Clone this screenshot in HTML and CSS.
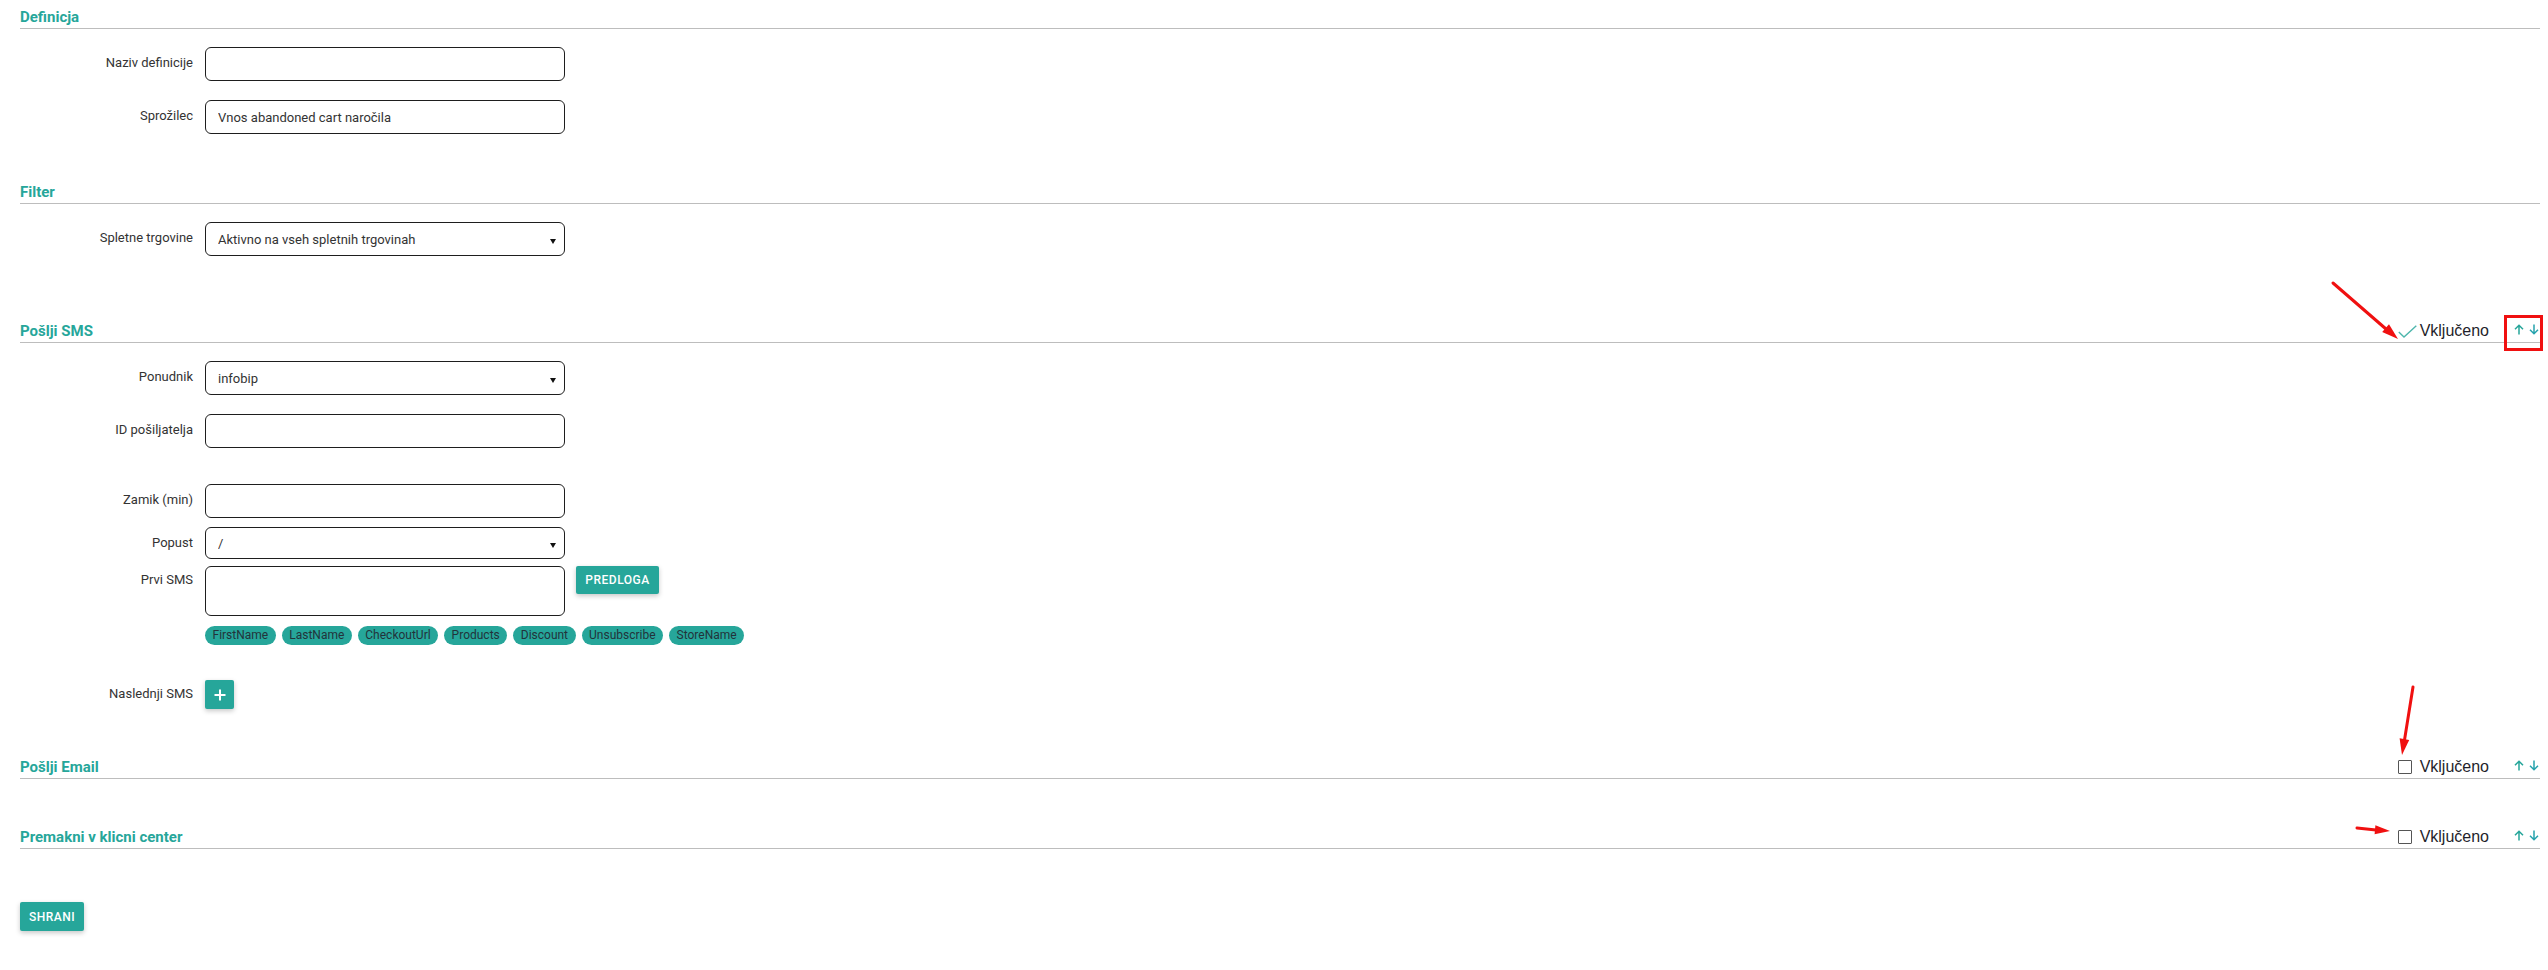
FILE: index.html
```html
<!DOCTYPE html>
<html lang="sl">
<head>
<meta charset="utf-8">
<title>Definicija</title>
<link rel="stylesheet" href="styles.css">
</head>
<body>
<div class="page">

  <section class="section">
    <div class="section-head">
      <h2 class="section-title">Definicja</h2>
    </div>
    <div class="section-body">
      <div class="form-row">
        <label class="field-label">Naziv definicije</label>
        <input class="field" type="text">
      </div>
      <div class="form-row">
        <label class="field-label">Sprožilec</label>
        <input class="field" type="text" value="Vnos abandoned cart naročila">
      </div>
    </div>
  </section>

  <section class="section section--filter">
    <div class="section-head">
      <h2 class="section-title">Filter</h2>
    </div>
    <div class="section-body">
      <div class="form-row">
        <label class="field-label">Spletne trgovine</label>
        <div class="select-wrap">
          <select class="field field--select"><option>Aktivno na vseh spletnih trgovinah</option></select>
        </div>
      </div>
    </div>
  </section>

  <section class="section">
    <div class="section-head">
      <h2 class="section-title">Pošlji SMS</h2>
      <div class="head-tools">
        <svg class="check-icon" width="19" height="13" viewBox="0 0 19 13"><polyline points="0.8,7 6,12 18.3,0.7" fill="none" stroke="#4db6ac" stroke-width="1.4"/></svg>
        <span class="toggle-text">Vključeno</span>
        <span class="order">
          <svg width="10" height="11" viewBox="0 0 10 11"><path d="M5 10.5V1.2M1 5.2L5 1.2L9 5.2" fill="none" stroke="#26a69a" stroke-width="1.5"/></svg>
          <svg width="10" height="11" viewBox="0 0 10 11"><path d="M5 0.5V9.8M1 5.8L5 9.8L9 5.8" fill="none" stroke="#26a3ad" stroke-width="1.5"/></svg>
        </span>
      </div>
    </div>
    <div class="section-body">
      <div class="form-row">
        <label class="field-label">Ponudnik</label>
        <div class="select-wrap">
          <select class="field field--select"><option>infobip</option></select>
        </div>
      </div>
      <div class="form-row form-row--wide">
        <label class="field-label">ID pošiljatelja</label>
        <input class="field" type="text">
      </div>
      <div class="form-row form-row--tight">
        <label class="field-label">Zamik (min)</label>
        <input class="field" type="text">
      </div>
      <div class="form-row form-row--tighter">
        <label class="field-label">Popust</label>
        <div class="select-wrap">
          <select class="field field--select field--short"><option>/</option></select>
        </div>
      </div>
      <div class="form-row form-row--chips">
        <label class="field-label field-label--top">Prvi SMS</label>
        <div class="sms-box">
          <textarea class="field field--area"></textarea>
          <button class="btn btn--template" type="button">Predloga</button>
        </div>
      </div>
      <div class="form-row form-row--next">
        <span></span>
        <div class="chips">
          <span class="chip">FirstName</span>
          <span class="chip">LastName</span>
          <span class="chip">CheckoutUrl</span>
          <span class="chip">Products</span>
          <span class="chip">Discount</span>
          <span class="chip">Unsubscribe</span>
          <span class="chip">StoreName</span>
        </div>
      </div>
      <div class="form-row form-row--center">
        <label class="field-label field-label--plain">Naslednji SMS</label>
        <div><button class="btn btn--add" type="button"><svg width="12" height="12" viewBox="0 0 12 12"><path d="M6 0.5V11.5M0.5 6H11.5" stroke="#fff" stroke-width="2"/></svg></button></div>
      </div>
    </div>
  </section>

  <section class="section">
    <div class="section-head">
      <h2 class="section-title">Pošlji Email</h2>
      <div class="head-tools">
        <span class="checkbox"></span>
        <span class="toggle-text">Vključeno</span>
        <span class="order">
          <svg width="10" height="11" viewBox="0 0 10 11"><path d="M5 10.5V1.2M1 5.2L5 1.2L9 5.2" fill="none" stroke="#26a69a" stroke-width="1.5"/></svg>
          <svg width="10" height="11" viewBox="0 0 10 11"><path d="M5 0.5V9.8M1 5.8L5 9.8L9 5.8" fill="none" stroke="#26a3ad" stroke-width="1.5"/></svg>
        </span>
      </div>
    </div>
  </section>

  <section class="section section--last">
    <div class="section-head">
      <h2 class="section-title">Premakni v klicni center</h2>
      <div class="head-tools">
        <span class="checkbox"></span>
        <span class="toggle-text">Vključeno</span>
        <span class="order">
          <svg width="10" height="11" viewBox="0 0 10 11"><path d="M5 10.5V1.2M1 5.2L5 1.2L9 5.2" fill="none" stroke="#26a69a" stroke-width="1.5"/></svg>
          <svg width="10" height="11" viewBox="0 0 10 11"><path d="M5 0.5V9.8M1 5.8L5 9.8L9 5.8" fill="none" stroke="#26a3ad" stroke-width="1.5"/></svg>
        </span>
      </div>
    </div>
  </section>

  <button class="btn btn--save" type="button">Shrani</button>
</div>

<svg class="annotations" width="2548" height="970" viewBox="0 0 2548 970">
  <g stroke="#f01010" stroke-width="3" fill="none" stroke-linecap="round">
    <line x1="2333" y1="283" x2="2386" y2="329"/>
    <line x1="2413" y1="687" x2="2404.5" y2="740"/>
    <line x1="2357" y1="828" x2="2376" y2="830"/>
    <rect x="2505.5" y="316.5" width="36" height="33" stroke-linecap="butt"/>
  </g>
  <g fill="#f01010">
    <polygon points="2398,339 2382.2,332 2389,324.2"/>
    <polygon points="2402,755 2399.6,738.3 2409.2,739.9"/>
    <polygon points="2390,831 2374.6,834.2 2375.4,825.2"/>
  </g>
</svg>
</body>
</html>
```
FILE: styles.css
```css
html, body {
  margin: 0;
  padding: 0;
  background: #ffffff;
}

body {
  position: relative;
  font-family: Roboto, "Liberation Sans", Arial, sans-serif;
  color: #333333;
  width: 2548px;
  min-height: 970px;
}

.page {
  padding: 5px 8px 0 20px;
}

.section {
  margin-bottom: 46px;
}

.section--filter {
  margin-bottom: 63px;
}

.section--last {
  margin-bottom: 53px;
}

.section-head {
  display: flex;
  align-items: center;
  justify-content: space-between;
  height: 23px;
  border-bottom: 1px solid #bdbdbd;
}

.section-title {
  margin: 0;
  font-size: 15px;
  font-weight: 700;
  color: #26a69a;
  line-height: 18px;
}

.head-tools {
  display: flex;
  align-items: center;
  padding-right: 1px;
}

.check-icon {
  display: block;
  margin-right: 3px;
  margin-top: 1px;
}

.checkbox {
  display: block;
  width: 12px;
  height: 12px;
  border: 1px solid #555555;
  border-radius: 1px;
  margin-right: 8px;
}

.toggle-text {
  font-family: "Liberation Sans", Arial, sans-serif;
  font-size: 16px;
  color: #1f1f2b;
  line-height: 18px;
  margin-right: 25px;
}

.order {
  display: flex;
  gap: 5px;
  margin-top: -2px;
}

.order svg {
  display: block;
}

.section-body {
  padding-top: 18px;
}

.form-row {
  display: grid;
  grid-template-columns: 173px auto;
  column-gap: 12px;
  align-items: start;
  margin-bottom: 19px;
}

.form-row:last-child {
  margin-bottom: 0;
}

.form-row--wide {
  margin-bottom: 36px;
}

.form-row--tight {
  margin-bottom: 9px;
}

.form-row--tighter {
  margin-bottom: 7px;
}

.form-row--chips {
  margin-bottom: 10px;
}

.form-row--next {
  margin-bottom: 35px;
}

.form-row--center {
  align-items: center;
}

.field-label {
  display: block;
  text-align: right;
  font-size: 13px;
  line-height: 32px;
  color: #333333;
}

.field-label--top {
  line-height: 28px;
}

.field-label--plain {
  line-height: 16px;
  margin-top: -2px;
}

.field {
  box-sizing: border-box;
  width: 360px;
  height: 34px;
  border: 1px solid #1e1e1e;
  border-radius: 6px;
  padding: 0 12px;
  font-family: Roboto, "Liberation Sans", Arial, sans-serif;
  font-size: 13px;
  color: #333333;
  background: #ffffff;
  outline: none;
  margin: 0;
}

.field--select {
  appearance: none;
  -webkit-appearance: none;
  display: block;
}

.field--short {
  height: 32px;
}

.select-wrap {
  position: relative;
  width: 360px;
}

.select-wrap::after {
  content: "";
  position: absolute;
  right: 9px;
  top: 50%;
  margin-top: 0px;
  border-left: 3px solid transparent;
  border-right: 3px solid transparent;
  border-top: 5px solid #111111;
}

.field--area {
  display: block;
  height: 50px;
  resize: none;
  padding: 8px 12px;
}

.sms-box {
  display: flex;
  align-items: flex-start;
  gap: 11px;
}

.btn {
  border: none;
  background: #26a69a;
  color: #ffffff;
  font-family: Roboto, "Liberation Sans", Arial, sans-serif;
  font-weight: 500;
  font-size: 12px;
  letter-spacing: 0.5px;
  text-transform: uppercase;
  border-radius: 2px;
  box-shadow: 0 2px 5px rgba(0, 0, 0, 0.22);
  cursor: pointer;
  margin: 0;
}

.btn--template {
  height: 28px;
  width: 83px;
  padding: 0;
}

.btn--add {
  display: flex;
  align-items: center;
  justify-content: center;
  width: 29px;
  height: 29px;
  padding: 0;
}

.btn--add svg {
  display: block;
}

.btn--save {
  display: block;
  width: 64px;
  height: 29px;
  padding: 0;
}

.chips {
  display: flex;
  gap: 6px;
}

.chip {
  display: block;
  height: 19px;
  line-height: 19px;
  padding: 0 7.5px;
  border-radius: 10px;
  background: #26a69a;
  color: #22333a;
  font-size: 12px;
}

.annotations {
  position: absolute;
  top: 0;
  left: 0;
  pointer-events: none;
}
```
